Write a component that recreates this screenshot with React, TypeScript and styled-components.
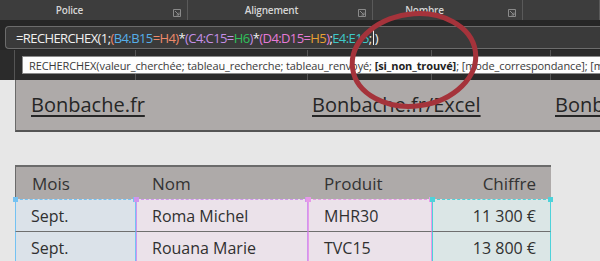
import React from "react";
import styled, { createGlobalStyle } from "styled-components";

const GlobalStyle = createGlobalStyle`
  html, body {
    margin: 0;
    padding: 0;
    background: #e7e7e7;
  }
`;

const Frame = styled.div`
  position: relative;
  width: 600px;
  height: 261px;
  overflow: hidden;
  display: flex;
  flex-direction: column;
  background: #e7e7e7;
  font-family: "Open Sans", "Noto Sans", sans-serif;
`;

/* ribbon group labels */
const Ribbon = styled.div`
  display: flex;
  height: 20px;
  background: #3d3d3d;
  flex-shrink: 0;
`;

const RibbonGroup = styled.div<{ $w: number; $pr: number }>`
  position: relative;
  width: ${(p) => p.$w}px;
  flex-shrink: 0;
  box-sizing: border-box;
  display: flex;
  align-items: center;
  justify-content: center;
  padding-right: ${(p) => p.$pr}px;
  border-right: 1px solid #5a5a5a;
  color: #d6d6d6;
  font-size: 10px;
  letter-spacing: -0.2px;
  font-weight: 600;
`;

const Launcher = styled.svg`
  position: absolute;
  right: 6px;
  bottom: 3px;
`;

/* formula bar */
const FormulaStrip = styled.div`
  height: 30px;
  background: #262626;
  padding: 6px 0 0 5px;
  box-sizing: border-box;
  flex-shrink: 0;
`;

const FormulaBox = styled.div`
  height: 23px;
  box-sizing: border-box;
  border: 1px solid #6c6c6c;
  border-right: none;
  border-radius: 4px 0 0 4px;
  background: #3a3a3a;
  padding-left: 10px;
  display: flex;
  align-items: center;
  white-space: nowrap;
  font-size: 13px;
  letter-spacing: -0.6px;
  color: #f0f0f0;
`;

const Tok = styled.span<{ $c?: string }>`
  color: ${(p) => p.$c || "#f0f0f0"};
`;

const Caret = styled.span`
  display: inline-block;
  width: 1px;
  height: 15px;
  background: #f0f0f0;
  margin: 0 1px;
`;

/* sheet column header strip */
const HeaderStrip = styled.div`
  position: relative;
  height: 30px;
  background: #2b2b2b;
  display: flex;
  flex-shrink: 0;
`;

const HeaderCell = styled.div<{ $w: number }>`
  width: ${(p) => p.$w}px;
  flex-shrink: 0;
  border-right: 1px solid #555;
  box-sizing: border-box;
`;

const Tooltip = styled.div`
  position: absolute;
  left: 22px;
  top: 6px;
  height: 18px;
  width: 620px;
  box-sizing: border-box;
  background: #fdfdfd;
  border: 1px solid #8a8a8a;
  padding: 0 0 0 6px;
  display: flex;
  align-items: center;
  white-space: nowrap;
  overflow: hidden;
  font-size: 11px;
  letter-spacing: -0.1px;
  color: #3a3a3a;
`;

const Strong = styled.b`
  font-weight: 700;
  color: #222;
`;

/* sheet */
const Sheet = styled.div`
  flex: 1;
  display: flex;
`;

const RowGutter = styled.div`
  width: 15px;
  flex-shrink: 0;
  background: #e7e7e7;
`;

const SheetBody = styled.div`
  flex: 1;
  display: flex;
  flex-direction: column;
`;

const Banner = styled.div`
  height: 52px;
  box-sizing: border-box;
  background: #aeaaa9;
  border-left: 1px solid #6a6a6a;
  border-bottom: 2px solid #555;
  display: grid;
  grid-template-columns: 281px 243px auto;
  align-items: center;
  padding: 0 0 2px 15px;
  white-space: nowrap;
  overflow: hidden;
`;

const BannerLink = styled.a`
  font-size: 20px;
  color: #262626;
  text-decoration: underline;
  text-underline-offset: 3px;
`;

const Table = styled.div`
  margin-top: 33px;
  width: 536px;
  display: grid;
  grid-template-columns: 121px 172px 124px 119px;
`;

const HeadCell = styled.div<{ $right?: boolean }>`
  height: 34px;
  box-sizing: border-box;
  background: #aeaaa9;
  border-top: 2px solid #6b6b6b;
  display: flex;
  align-items: center;
  justify-content: ${(p) => (p.$right ? "flex-end" : "flex-start")};
  padding: 0 15px 0 16px;
  font-size: 17px;
  color: #333;
  &:first-child {
    border-left: 1px solid #6b6b6b;
  }
`;

const Cell = styled.div<{
  $bg: string;
  $edge: string;
  $right?: boolean;
  $first?: boolean;
}>`
  position: relative;
  height: 33px;
  box-sizing: border-box;
  background: ${(p) => p.$bg};
  border-left: 1px solid ${(p) => p.$edge};
  border-right: 1px solid ${(p) => p.$edge};
  border-top: ${(p) => (p.$first ? `1px dashed ${p.$edge}` : "none")};
  border-bottom: 1px solid #6f6f6f;
  display: flex;
  align-items: center;
  justify-content: ${(p) => (p.$right ? "flex-end" : "flex-start")};
  padding: 0 14px 0 15px;
  font-size: 16px;
  color: #303030;
`;

const Handle = styled.span<{ $c: string; $side: "left" | "right" }>`
  position: absolute;
  top: -3px;
  ${(p) => p.$side}: -3px;
  width: 5px;
  height: 5px;
  background: ${(p) => p.$c};
`;

const Circle = styled.svg`
  position: absolute;
  left: 344px;
  top: 8px;
  pointer-events: none;
`;

const groups = [
  { label: "Police", w: 188, pr: 48 },
  { label: "Alignement", w: 185, pr: 17 },
  { label: "Nombre", w: 150, pr: 46 },
  { label: "", w: 77, pr: 0 },
];

const columns = [
  { head: "Mois", bg: "#dbe2e9", edge: "#74c2f2", right: false },
  { head: "Nom", bg: "#ebe2ea", edge: "#cf95ee", right: false },
  { head: "Produit", bg: "#ebe2ea", edge: "#e79ae8", right: false },
  { head: "Chiffre", bg: "#dbe6e6", edge: "#4ed2da", right: true },
];

const rows = [
  ["Sept.", "Roma Michel", "MHR30", "11 300 €"],
  ["Sept.", "Rouana Marie", "TVC15", "13 800 €"],
];

const LaunchIcon = () => (
  <Launcher width="8" height="8" viewBox="0 0 8 8">
    <path d="M0.5 0.5 H7.5 V7.5 H0.5 Z" fill="none" stroke="#8a8a8a" />
    <path d="M2 2 L6 6 M6 3.5 V6 H3.5" fill="none" stroke="#8a8a8a" />
  </Launcher>
);

const App: React.FC = () => {
  return (
    <Frame>
      <GlobalStyle />
      <Ribbon>
        {groups.map((g, i) => (
          <RibbonGroup $w={g.w} $pr={g.pr} key={i}>
            {g.label}
            {g.label && <LaunchIcon />}
          </RibbonGroup>
        ))}
      </Ribbon>

      <FormulaStrip>
        <FormulaBox>
          <Tok>=RECHERCHEX(1;</Tok>
          <Tok $c="#ee8a6a">(</Tok>
          <Tok $c="#56aee8">B4:B15</Tok>
          <Tok $c="#ee8a6a">=H4)</Tok>
          <Tok>*</Tok>
          <Tok $c="#c48fe6">(C4:C15</Tok>
          <Tok $c="#c48fe6">=</Tok>
          <Tok $c="#2fc05a">H6</Tok>
          <Tok $c="#c48fe6">)</Tok>
          <Tok>*</Tok>
          <Tok $c="#e67ad8">(D4:D15=</Tok>
          <Tok $c="#e8a032">H5</Tok>
          <Tok $c="#e67ad8">)</Tok>
          <Tok>;</Tok>
          <Tok $c="#3ec8c8">E4:E15</Tok>
          <Tok>;</Tok>
          <Caret />
          <Tok>)</Tok>
        </FormulaBox>
      </FormulaStrip>

      <HeaderStrip>
        <HeaderCell $w={15} />
        <HeaderCell $w={121} />
        <HeaderCell $w={172} />
        <HeaderCell $w={124} />
        <HeaderCell $w={119} />
        <Tooltip>
          RECHERCHEX(valeur_cherchée; tableau_recherche; tableau_renvoyé;&nbsp;
          <Strong>[si_non_trouvé]</Strong>; [mode_correspondance]; [mode_recherche])
        </Tooltip>
      </HeaderStrip>

      <Sheet>
        <RowGutter />
        <SheetBody>
          <Banner>
            <BannerLink>Bonbache.fr</BannerLink>
            <BannerLink>Bonbache.fr/Excel</BannerLink>
            <BannerLink>Bonbache.fr/Access</BannerLink>
          </Banner>

          <Table>
            {columns.map((c) => (
              <HeadCell key={c.head} $right={c.right}>
                {c.head}
              </HeadCell>
            ))}
            {rows.map((r, ri) =>
              r.map((v, ci) => {
                const col = columns[ci];
                return (
                  <Cell
                    key={ri + "-" + ci}
                    $bg={col.bg}
                    $edge={col.edge}
                    $right={col.right}
                    $first={ri === 0}
                  >
                    {ri === 0 && (
                      <>
                        <Handle $c={col.edge} $side="left" />
                        <Handle $c={col.edge} $side="right" />
                      </>
                    )}
                    {v}
                  </Cell>
                );
              })
            )}
          </Table>
        </SheetBody>
      </Sheet>

      <Circle width="140" height="110" viewBox="0 0 140 110">
        <ellipse
          cx="70"
          cy="52"
          rx="62"
          ry="46"
          transform="rotate(-8 70 52)"
          fill="none"
          stroke="#a5333b"
          strokeWidth="5"
        />
      </Circle>
    </Frame>
  );
};

export default App;
